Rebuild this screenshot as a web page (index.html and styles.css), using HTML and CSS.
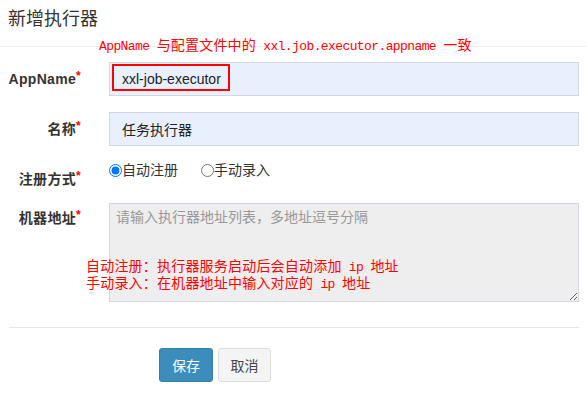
FILE: index.html
```html
<!DOCTYPE html>
<html lang="zh-CN">
<head>
<meta charset="utf-8">
<title>新增执行器</title>
<link rel="stylesheet" href="styles.css">
</head>
<body>
<div class="modal">
  <div class="header">
    <h4 class="title">新增执行器</h4>
    <div class="note note-top"><span class="en">AppName </span>与配置文件中的<span class="en"> xxl.job.executor.appname </span>一致</div>
  </div>
  <form class="form">
    <div class="row">
      <label class="label">AppName<span class="req">*</span></label>
      <div class="control">
        <input class="input" type="text" value="xxl-job-executor">
        <span class="mark"></span>
      </div>
    </div>
    <div class="row">
      <label class="label">名称<span class="req">*</span></label>
      <div class="control">
        <input class="input" type="text" value="任务执行器">
      </div>
    </div>
    <div class="row row-radio">
      <label class="label">注册方式<span class="req">*</span></label>
      <div class="control radios">
        <label class="radio"><input type="radio" name="t" checked>自动注册</label>
        <label class="radio"><input type="radio" name="t">手动录入</label>
      </div>
    </div>
    <div class="row row-area">
      <label class="label">机器地址<span class="req">*</span></label>
      <div class="control">
        <textarea class="textarea" placeholder="请输入执行器地址列表，多地址逗号分隔" disabled></textarea>
        <div class="note note-area">自动注册：执行器服务启动后会自动添加<span class="en"> ip </span>地址<br>手动录入：在机器地址中输入对应的<span class="en"> ip </span>地址</div>
      </div>
    </div>
    <hr class="sep">
    <div class="actions">
      <button type="button" class="btn btn-primary">保存</button>
      <button type="button" class="btn btn-default">取消</button>
    </div>
  </form>
</div>
</body>
</html>
```

FILE: styles.css
```css
* { box-sizing: border-box; }
html, body { margin: 0; padding: 0; background: #fff; }
body {
  font-family: "Liberation Sans", "Noto Sans CJK SC", sans-serif;
  font-size: 14px;
  color: #333;
}
.modal { width: 587px; height: 405px; overflow: hidden; }
.header {
  position: relative;
  height: 47px;
  padding: 7px 8px 0;
  border-bottom: 1px solid #f0f0f0;
}
.title {
  margin: 0;
  font-size: 18px;
  font-weight: normal;
  line-height: 24px;
  color: #333;
}
.note {
  position: absolute;
  color: #f00;
  font-family: "Noto Sans CJK SC", sans-serif;
  font-size: 14px;
  line-height: 14px;
  letter-spacing: 0.2px;
  white-space: nowrap;
}
.note .en {
  font-family: "Liberation Mono", monospace;
  font-size: 13px;
  letter-spacing: -0.6px;
}
.note-top { left: 99px; top: 37px; }
.note-area { left: -23px; top: 55px; }

.form { padding: 15px 8px 0 0; }
.row {
  display: grid;
  grid-template-columns: 81px 470px;
  column-gap: 28px;
  margin-bottom: 16px;
}
.label {
  text-align: right;
  font-weight: bold;
  font-size: 14px;
  line-height: 20px;
  padding-top: 7px;
  white-space: nowrap;
  letter-spacing: 0.3px;
}
.req {
  color: #f00;
  font-size: 12px;
  vertical-align: top;
  line-height: 14px;
}
.control { position: relative; }
.input {
  display: block;
  width: 470px;
  height: 34px;
  padding: 6px 12px;
  border: 1px solid #d2d6de;
  background: #e8f0fe;
  font-family: "Liberation Sans", "Noto Sans CJK SC", sans-serif;
  font-size: 14px;
  color: #222;
  outline: none;
}
.mark {
  position: absolute;
  left: 3px;
  top: 2px;
  width: 118px;
  height: 27px;
  border: 2px solid #f00;
}
.row-radio { margin-bottom: 14px; }
.row-radio .label { padding-top: 7px; }
.radios {
  display: flex;
  align-items: flex-start;
  gap: 23px;
  padding-top: 0;
  line-height: 16px;
}
.radio {
  display: flex;
  align-items: center;
  font-size: 14px;
  color: #333;
}
.radio input {
  margin: 0;
  width: 13px;
  height: 13px;
}
.row-area { margin-bottom: 0; }
.row-area .label { padding-top: 5px; }
.textarea {
  display: block;
  width: 470px;
  height: 99px;
  margin: 0;
  padding: 3px 6px;
  border: 1px solid #d2d6de;
  background: #eee;
  font-family: "Liberation Sans", "Noto Sans CJK SC", sans-serif;
  font-size: 14px;
  line-height: 20px;
  resize: both;
}
.textarea::placeholder { color: #999; }
.sep {
  margin: 25px 0 0 9px;
  width: 570px;
  border: 0;
  border-top: 1px solid #e5e5e5;
  height: 0;
}
.actions {
  display: flex;
  gap: 5px;
  padding: 20px 0 0 159px;
}
.btn {
  height: 34px;
  padding: 0;
  font-family: "Noto Sans CJK SC", sans-serif;
  font-size: 14px;
  line-height: 32px;
  text-align: center;
  white-space: nowrap;
  border-radius: 3px;
  border: 1px solid transparent;
}
.btn-primary { background: #3c8dbc; border-color: #367fa9; color: #fff; width: 54px; }
.btn-default { background: #f4f4f4; border-color: #ddd; color: #444; width: 53px; }
```
